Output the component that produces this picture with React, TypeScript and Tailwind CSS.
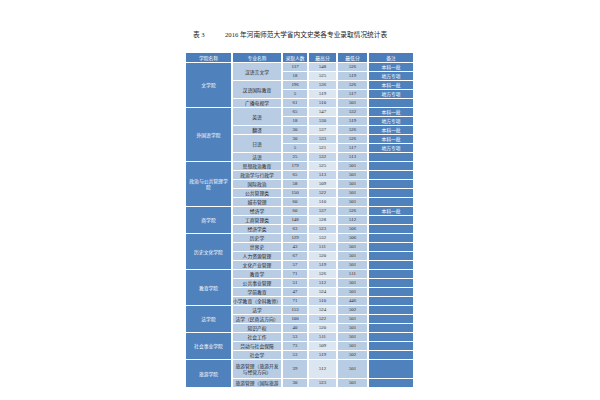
import React from "react";

type Row = [string, string, string, string];
type Major = { name: React.ReactNode; rows: Row[] };
type College = { name: React.ReactNode; majors: Major[] };

const data: College[] = [
  {
    name: "文学院",
    majors: [
      { name: "汉语言文学", rows: [["137", "548", "526", "本科一批"], ["18", "525", "519", "地方专项"]] },
      { name: "汉语国际教育", rows: [["196", "536", "526", "本科一批"], ["5", "519", "517", "地方专项"]] },
      { name: "广播电视学", rows: [["61", "510", "501", ""]] },
    ],
  },
  {
    name: "外国语学院",
    majors: [
      { name: "英语", rows: [["65", "547", "532", "本科一批"], ["18", "530", "519", "地方专项"]] },
      { name: "翻译", rows: [["30", "537", "526", "本科一批"]] },
      { name: "日语", rows: [["30", "533", "526", "本科一批"], ["5", "521", "517", "地方专项"]] },
      { name: "法语", rows: [["25", "532", "513", ""]] },
    ],
  },
  {
    name: (
      <>
        政治与公共管理学
        <br />院
      </>
    ),
    majors: [
      { name: "思想政治教育", rows: [["179", "525", "501", ""]] },
      { name: "政治学与行政学", rows: [["65", "513", "501", ""]] },
      { name: "国际政治", rows: [["58", "509", "501", ""]] },
      { name: "公共管理类", rows: [["150", "522", "501", ""]] },
      { name: "城市管理", rows: [["60", "510", "501", ""]] },
    ],
  },
  {
    name: "商学院",
    majors: [
      { name: "经济学", rows: [["60", "537", "526", "本科一批"]] },
      { name: "工商管理类", rows: [["148", "528", "512", ""]] },
      { name: "经济学类", rows: [["63", "523", "506", ""]] },
    ],
  },
  {
    name: "历史文化学院",
    majors: [
      { name: "历史学", rows: [["129", "532", "506", ""]] },
      { name: "世界史", rows: [["43", "511", "501", ""]] },
      { name: "人力资源管理", rows: [["67", "520", "501", ""]] },
      { name: "文化产业管理", rows: [["57", "519", "501", ""]] },
    ],
  },
  {
    name: "教育学院",
    majors: [
      { name: "教育学", rows: [["71", "526", "511", ""]] },
      { name: "公共事业管理", rows: [["51", "512", "501", ""]] },
      { name: "学前教育", rows: [["47", "524", "501", ""]] },
      { name: "小学教育（全科教师）", rows: [["71", "510", "446", ""]] },
    ],
  },
  {
    name: "法学院",
    majors: [
      { name: "法学", rows: [["153", "524", "502", ""]] },
      { name: "法学（民商法方向）", rows: [["100", "522", "501", ""]] },
      { name: "知识产权", rows: [["40", "520", "501", ""]] },
    ],
  },
  {
    name: "社会事业学院",
    majors: [
      { name: "社会工作", rows: [["53", "511", "501", ""]] },
      { name: "劳动与社会保障", rows: [["73", "509", "501", ""]] },
      { name: "社会学", rows: [["53", "519", "502", ""]] },
    ],
  },
  {
    name: "旅游学院",
    majors: [
      {
        name: (
          <>
            旅游管理（旅游开发
            <br />
            与经营方向）
          </>
        ),
        rows: [["39", "512", "501", ""]],
      },
      { name: "旅游管理（国际旅游", rows: [["30", "523", "501", ""]] },
    ],
  },
];

const span: Record<number, string> = {
  1: "row-span-1",
  2: "row-span-2",
  3: "row-span-3",
  4: "row-span-4",
  5: "row-span-5",
  6: "row-span-6",
};

const cell = "flex items-center justify-center text-center leading-[1.15] whitespace-nowrap";
const blue = "bg-[#4f81bd] text-white";
const num = "font-['Liberation_Serif','Noto_Sans_CJK_SC',serif] text-[#262626]";

export default function App() {
  const items: React.ReactNode[] = [];
  let g = 0;
  data.forEach((c, ci) => {
    const total = c.majors.reduce((a, m) => a + m.rows.length, 0);
    items.push(
      <div key={`c${ci}`} className={`${cell} ${blue} ${span[total]}`}>
        <div>{c.name}</div>
      </div>
    );
    c.majors.forEach((m, mi) => {
      items.push(
        <div key={`m${ci}-${mi}`} className={`${cell} bg-[#b8cce4] text-[#262626] ${span[m.rows.length]}`}>
          <div>{m.name}</div>
        </div>
      );
      m.rows.forEach((r, ri) => {
        const even = g % 2 === 1;
        const k = `${ci}-${mi}-${ri}`;
        items.push(
          <div key={`a${k}`} className={`${cell} ${num} bg-[#b8cce4]`}>{r[0]}</div>,
          <div key={`b${k}`} className={`${cell} ${num} ${even ? "bg-[#dce6f1]" : "bg-[#c6d6ea]"}`}>{r[1]}</div>,
          <div key={`d${k}`} className={`${cell} ${num} bg-[#b8cce4]`}>{r[2]}</div>,
          <div key={`e${k}`} className={`${cell} ${blue}`}>{r[3]}</div>
        );
        g++;
      });
    });
  });

  return (
    <div className="w-[600px] h-[400px] bg-white overflow-hidden pl-[186px] font-['Noto_Sans_CJK_SC','Liberation_Sans',sans-serif]">
      <div className="mt-[30px] h-[10px] flex items-center text-[6.7px] leading-[10px] text-[#222] font-['Liberation_Serif','Noto_Sans_CJK_SC',serif]">
        <span className="ml-[7px] w-[32px]">表 3</span>
        <span>2016 年河南师范大学省内文史类各专业录取情况统计表</span>
      </div>
      <div className="mt-[13px] grid w-[227px] grid-cols-[45px_48px_24px_27px_29px_44px] grid-rows-[9px_repeat(33,8px)_18px_8px] gap-x-[2px] gap-y-px text-[4.8px]">
        {["学院名称", "专业名称", "录取人数", "最高分", "最低分", "备注"].map((h) => (
          <div key={h} className={`${cell} bg-[#4a7dba] text-white`}>
            {h}
          </div>
        ))}
        {items}
      </div>
    </div>
  );
}
